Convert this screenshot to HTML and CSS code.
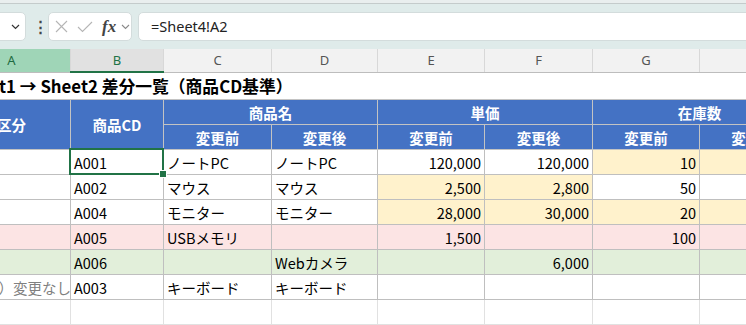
FILE: index.html
```html
<!doctype html>
<html lang="ja">
<head>
    <meta charset="UTF-8">
    <meta name="viewport" content="width=device-width, initial-scale=1.0">
    <title>差分一覧</title>
    <link rel="stylesheet" href="styles.css">
</head>
<body>
<div class="topline"></div>
<div class="formula-bar">
    <div class="name-box">
        <svg class="chev" width="9" height="6" viewBox="0 0 9 6"><path d="M1 1 L4.5 4.5 L8 1" fill="none" stroke="#333" stroke-width="1.2"/></svg>
    </div>
    <div class="dots">⋮</div>
    <div class="fx-box">
        <svg class="ico" width="13" height="13" viewBox="0 0 13 13"><path d="M1 1 L12 12 M12 1 L1 12" stroke="#b5b5b5" stroke-width="1.1" fill="none"/></svg>
        <svg class="ico" width="16" height="12" viewBox="0 0 16 12"><path d="M1 6 L5.5 10.5 L15 1" stroke="#b5b5b5" stroke-width="1.1" fill="none"/></svg>
        <span class="fx">fx</span>
        <svg class="chev-s" width="9" height="6" viewBox="0 0 9 6"><path d="M1 1 L4.5 4.5 L8 1" fill="none" stroke="#8a8a8a" stroke-width="1.1"/></svg>
    </div>
    <div class="formula-input">=Sheet4!A2</div>
</div>

<div class="sheet">
<table class="grid">
    <colgroup>
        <col class="w-a"><col class="w-b"><col class="w-c"><col class="w-d">
        <col class="w-e"><col class="w-f"><col class="w-g"><col class="w-h">
    </colgroup>
    <tr class="colhead">
        <th class="ch-a">A</th><th class="ch-b">B</th><th>C</th><th>D</th>
        <th>E</th><th>F</th><th>G</th><th>H</th>
    </tr>
    <tr class="title">
        <td colspan="8"><span>Sheet1 → Sheet2 差分一覧（商品CD基準）</span></td>
    </tr>
    <tr class="hd">
        <th rowspan="2">区分</th>
        <th rowspan="2">商品CD</th>
        <th colspan="2">商品名</th>
        <th colspan="2">単価</th>
        <th colspan="2">在庫数</th>
    </tr>
    <tr class="hd">
        <th>変更前</th><th>変更後</th>
        <th>変更前</th><th>変更後</th>
        <th>変更前</th><th>変更後</th>
    </tr>
    <tr class="row">
        <td class="kubun">変更</td>
        <td class="sel">A001<span class="handle"></span></td>
        <td>ノートPC</td><td>ノートPC</td>
        <td class="num">120,000</td><td class="num">120,000</td>
        <td class="num diff">10</td><td class="num diff">15</td>
    </tr>
    <tr class="row">
        <td class="kubun">変更</td>
        <td>A002</td>
        <td>マウス</td><td>マウス</td>
        <td class="num diff">2,500</td><td class="num diff">2,800</td>
        <td class="num">50</td><td class="num">50</td>
    </tr>
    <tr class="row">
        <td class="kubun">変更</td>
        <td>A004</td>
        <td>モニター</td><td>モニター</td>
        <td class="num diff">28,000</td><td class="num diff">30,000</td>
        <td class="num diff">20</td><td class="num diff">25</td>
    </tr>
    <tr class="row deleted">
        <td class="kubun">削除</td>
        <td>A005</td>
        <td>USBメモリ</td><td></td>
        <td class="num">1,500</td><td class="num"></td>
        <td class="num">100</td><td class="num"></td>
    </tr>
    <tr class="row added">
        <td class="kubun">追加</td>
        <td>A006</td>
        <td></td><td>Webカメラ</td>
        <td class="num"></td><td class="num">6,000</td>
        <td class="num"></td><td class="num">30</td>
    </tr>
    <tr class="row">
        <td class="kubun muted">（参考）変更なし</td>
        <td>A003</td>
        <td>キーボード</td><td>キーボード</td>
        <td></td><td></td><td></td><td></td>
    </tr>
    <tr class="row empty">
        <td></td><td></td><td></td><td></td><td></td><td></td><td></td><td></td>
    </tr>
</table>
</div>
</body>
</html>
```

FILE: styles.css
```css
body {
    margin: 0;
    width: 746px;
    height: 325px;
    overflow: hidden;
    background-color: #ffffff;
    font-family: "Noto Sans CJK JP", "Noto Sans", sans-serif;
    color: #000000;
}

/* formula bar */
.topline {
    height: 3px;
    background-color: #e9eeee;
    border-bottom: 1px solid #c4cbcb;
}

.formula-bar {
    display: flex;
    align-items: center;
    height: 45px;
    background-color: #dfebea;
}

.name-box {
    width: 36px;
    height: 29px;
    margin-left: -10px;
    box-sizing: border-box;
    background: #ffffff;
    border: 1px solid #d3dcdc;
    border-radius: 5px;
    display: flex;
    align-items: center;
    justify-content: flex-end;
    padding-right: 5px;
}

.dots {
    width: 4px;
    margin-left: 7px;
    font-family: "Noto Sans", sans-serif;
    font-size: 15px;
    font-weight: bold;
    color: #444;
    line-height: 1;
}

.fx-box {
    width: 84px;
    height: 29px;
    margin-left: 11px;
    box-sizing: border-box;
    background: #ffffff;
    border: 1px solid #d3dcdc;
    border-radius: 5px;
    display: flex;
    align-items: center;
    padding-left: 6px;
}

.fx-box .ico + .ico {
    margin-left: 9px;
}

.fx {
    margin-left: 9px;
    font-family: "Liberation Serif", serif;
    font-style: italic;
    font-weight: bold;
    font-size: 17px;
    color: #444;
    line-height: 1;
}

.chev-s {
    margin-left: 5px;
}

.formula-input {
    flex: 1;
    height: 29px;
    margin-left: 6px;
    margin-right: -10px;
    box-sizing: border-box;
    background: #ffffff;
    border: 1px solid #d3dcdc;
    border-radius: 5px;
    padding-left: 12px;
    font-family: "Noto Sans", sans-serif;
    font-size: 14.5px;
    line-height: 27px;
    color: #222;
}

/* sheet grid */
.sheet {
    margin-left: -48px;
}

.grid {
    border-collapse: collapse;
    table-layout: fixed;
    width: 854px;
}

.w-a { width: 118px; }
.w-b { width: 93px; }
.w-c { width: 108px; }
.w-d { width: 106px; }
.w-e { width: 107px; }
.w-f { width: 108px; }
.w-g { width: 107px; }
.w-h { width: 107px; }

.colhead th {
    height: 22px;
    padding: 0;
    background-color: #f2f2f2;
    border-left: 1px solid #d8d8d8;
    border-bottom: 1px solid #bdbdbd;
    font-family: "Noto Sans", sans-serif;
    font-weight: normal;
    font-size: 13px;
    color: #555;
}

.colhead .ch-a {
    background-color: #9fd5b7;
    color: #1e6b41;
}

.colhead .ch-b {
    background-color: #e1e1e1;
    color: #217346;
    border-bottom: 2px solid #217346;
}

.title td {
    height: 26px;
    padding: 0 0 0 6px;
    white-space: nowrap;
    overflow: visible;
    font-weight: bold;
    font-size: 16.8px;
}

.hd th {
    height: 24px;
    padding: 0;
    background-color: #4472c4;
    color: #ffffff;
    font-weight: bold;
    font-size: 14.5px;
    border: 1px solid #c3c3c3;
}

.row td {
    height: 24px;
    padding: 0 3px;
    font-size: 14.5px;
    white-space: nowrap;
    overflow: hidden;
    border: 1px solid #bfbfbf;
}

.row .num {
    text-align: right;
}

.row .diff {
    background-color: #fff2cc;
}

.row .kubun {
    padding-left: 2px;
}

.row .muted {
    color: #808080;
}

.deleted td {
    background-color: #fce4e4;
}

.added td {
    background-color: #e2efda;
}

.empty td {
    border-color: #e1e1e1;
    border-top-color: #bfbfbf;
}

/* active cell */
.row .sel {
    position: relative;
    overflow: visible;
}

.row .sel::after {
    content: "";
    position: absolute;
    left: -2px;
    top: -2px;
    right: -1px;
    bottom: -1px;
    border: 2px solid #217346;
    pointer-events: none;
}

.handle {
    position: absolute;
    right: -4px;
    bottom: -4px;
    width: 6px;
    height: 6px;
    background-color: #217346;
    border: 1px solid #ffffff;
    z-index: 1;
}
```
